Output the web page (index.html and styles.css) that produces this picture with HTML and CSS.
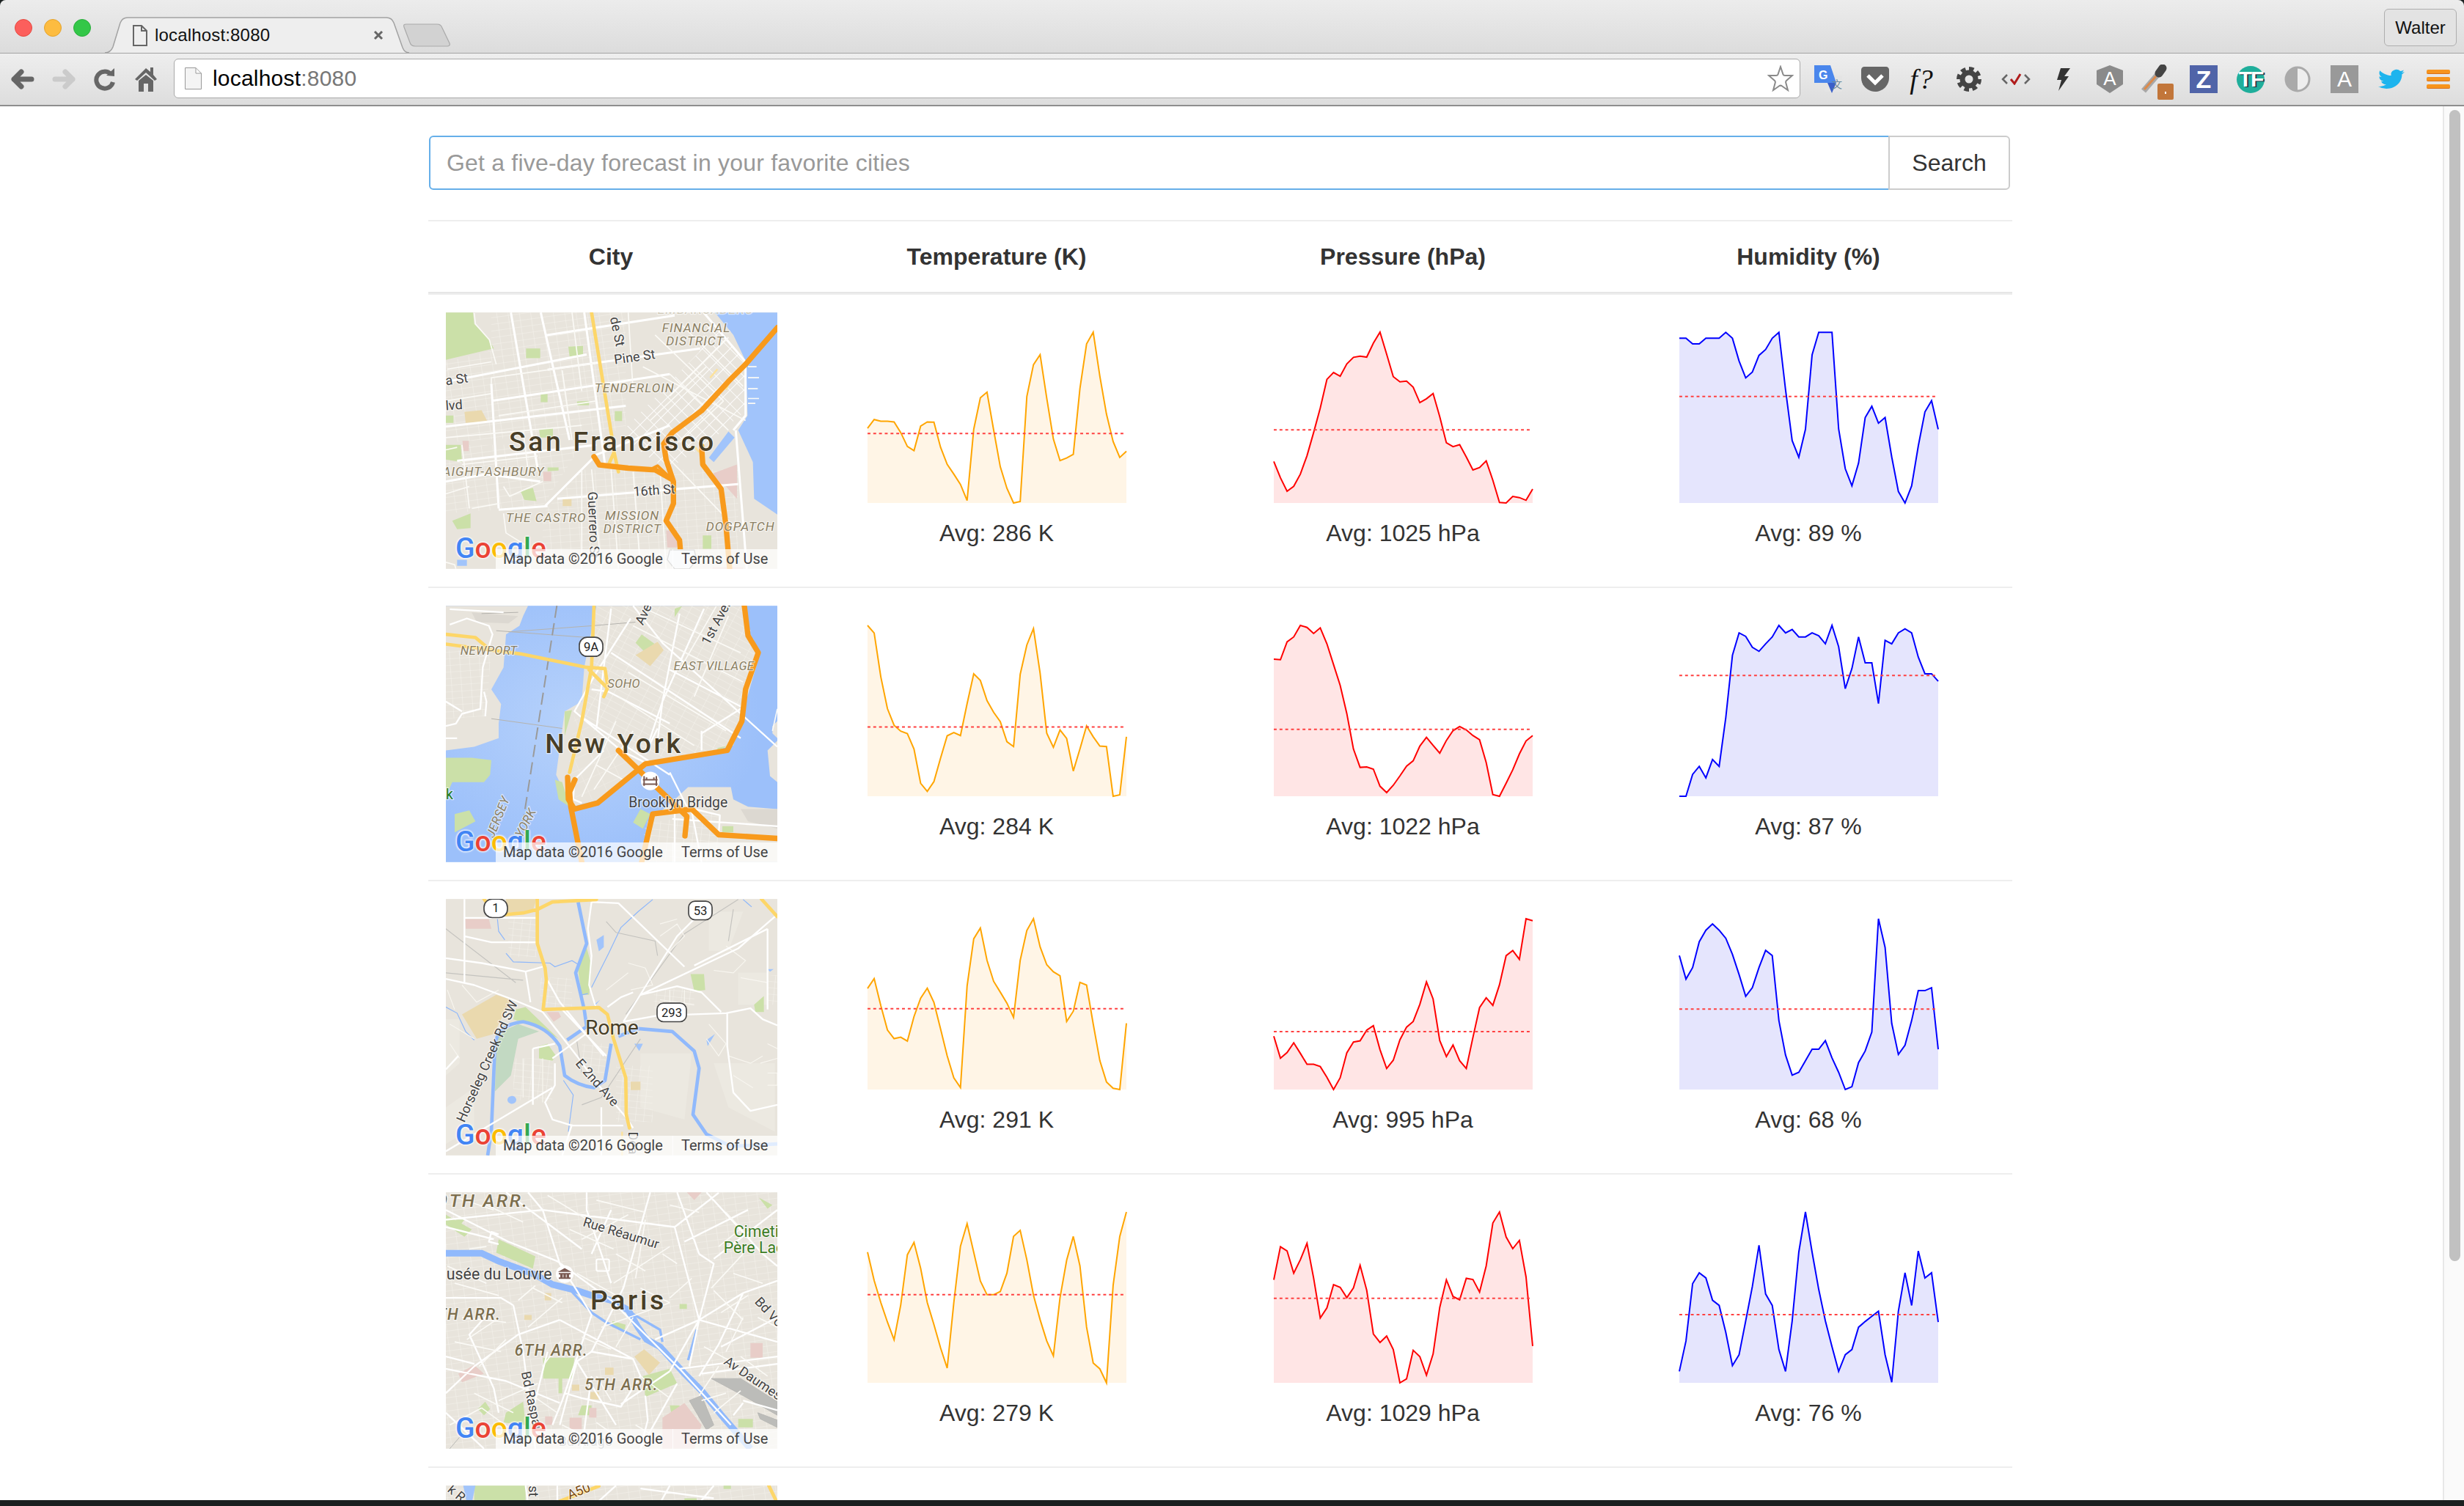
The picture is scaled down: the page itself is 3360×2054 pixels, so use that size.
FILE: index.html
```html
<!DOCTYPE html>
<html lang="en">
<head>
<meta charset="utf-8">
<title>localhost:8080</title>
<link rel="stylesheet" href="styles.css">
</head>
<body>
<svg class="defs" width="0" height="0" aria-hidden="true">
  <defs>
    <pattern id="g1" width="46" height="27" patternUnits="userSpaceOnUse" patternTransform="rotate(-8)"><path class="gl" d="M0 0H46M0 0V27"/></pattern>
    <pattern id="g2" width="40" height="40" patternUnits="userSpaceOnUse" patternTransform="rotate(-45)"><path class="gl gl-w" d="M0 0H40M0 0V40"/></pattern>
    <pattern id="g3" width="40" height="27" patternUnits="userSpaceOnUse" patternTransform="rotate(-4)"><path class="gl" d="M0 0H40M0 0V27"/></pattern>
    <pattern id="g4" width="58" height="26" patternUnits="userSpaceOnUse" patternTransform="rotate(28)"><path class="gl" d="M0 0H58M0 0V26"/></pattern>
    <pattern id="g5" width="34" height="26" patternUnits="userSpaceOnUse" patternTransform="rotate(6)"><path class="gl" d="M0 0H34M0 0V26"/></pattern>
    <pattern id="g6" width="70" height="48" patternUnits="userSpaceOnUse" patternTransform="rotate(-24)"><path class="gl gl-p" d="M0 0H70M0 0V48"/></pattern>
    <radialGradient id="wg" cx="40%" cy="45%" r="55%"><stop offset="0" stop-color="#b7d2fb"/><stop offset="1" stop-color="#9cc0fa"/></radialGradient>
  </defs>
</svg>
<div class="app">
  <header class="tabstrip">
    <div class="lights"><span class="light red"></span><span class="light amber"></span><span class="light green"></span></div>
    <div class="tab">
      <svg class="tab-shape" viewBox="0 0 415 50"><path d="M0 49C6 49 9 46 11 41L21 8C23 3 26 1 31 1H384C389 1 392 3 394 8L406 42C408 47 411 49 415 49"/></svg>
      <svg class="tab-doc" viewBox="0 0 20 29"><path d="M1 1H12L19 8V28H1Z M12 1V8H19"/></svg>
      <span class="tab-title">localhost:8080</span>
      <svg class="tab-x" viewBox="0 0 14 14"><path d="M2 2L12 12M12 2L2 12"/></svg>
    </div>
    <svg class="newtab" viewBox="0 0 64 32"><path d="M4 1H46C50 1 52 3 53 6L63 27C64 30 62 31 60 31H16C12 31 10 29 9 26L1 5C0 2 1 1 4 1Z"/></svg>
    <button class="profile">Walter</button>
  </header>
  <nav class="toolbar">
    <div class="navbtn"><svg viewBox="0 0 34 34" width="34" height="34"><path class="ico-nav" d="M5 17L15 7M5 17L15 27M5 17H29"/></svg></div>
    <div class="navbtn"><svg viewBox="0 0 34 34" width="34" height="34"><path class="ico-nav ico-off" d="M29 17L19 7M29 17L19 27M29 17H5"/></svg></div>
    <div class="navbtn"><svg viewBox="0 0 34 34" width="34" height="34"><path class="ico-reload" d="M25 10A11.5 11.5 0 1 0 28 21"/><path class="ico-fill" d="M19 12L30 2V13Z"/></svg></div>
    <div class="navbtn"><svg viewBox="0 0 30 36" width="30" height="36"><path class="ico-fill" d="M15 3L21 8V2H25V12L30 18L27 20L15 9L3 20L0 18ZM5 20L15 12L25 20V35H18V24H12V35H5Z"/></svg></div>
    <div class="omnibox">
      <svg class="omni-doc" viewBox="0 0 23 30"><path d="M.5.5H15L22.500 8V29.500H.5Z M15 .5V8H22.500"/></svg>
      <span class="url">localhost<span class="url-port">:8080</span></span>
      <svg class="omni-star" viewBox="0 0 36 36"><path d="M18 2L21.500 12.500C22 14 23 14 24 14H34L26 21C25 22 25 23 25.300 24L28 34L19.500 28C18.500 27.500 17.500 27.500 16.500 28L8 34L10.700 24C11 23 11 22 10 21L2 14H12C13 14 14 14 14.500 12.500Z"/></svg>
    </div>
    <div class="actions">
      <div class="act"><svg viewBox="0 0 38 38" width="38" height="38"><rect x="14" y="14" width="24" height="22" fill="#e4e4e4"/><path fill="#4a86ec" d="M0 0H22L30 24H0Z"/><path fill="#3a5fc8" d="M18 24H30L24 38Z"/><text class="ico-t t-g" x="6" y="19">G</text><text class="ico-t t-zh" x="24" y="31">文</text></svg></div>
      <div class="act"><svg viewBox="0 0 38 34" width="38" height="34"><path fill="#666" d="M4 0H34C36 0 38 2 38 4V15C38 26 29 34 19 34C9 34 0 26 0 15V4C0 2 2 0 4 0Z"/><path class="chev" d="M9 12L19 22L29 12"/></svg></div>
      <div class="act"><span class="ico-fq">f?</span></div>
      <div class="act"><svg viewBox="0 0 34 34" width="34" height="34"><circle class="gear-ring" cx="17" cy="17" r="9"/><circle class="gear-teeth" cx="17" cy="17" r="14" pathLength="48"/></svg></div>
      <div class="act"><svg viewBox="0 0 40 16" width="40" height="16"><path class="code-b" d="M8 2L2 8L8 14M32 2L38 8L32 14"/><path class="code-c" d="M13 8L18 14L26 1"/></svg></div>
      <div class="act"><svg viewBox="0 0 20 31" width="20" height="31"><path fill="#333" d="M7 0H20L12 11H18L4 31L8 16H2Z"/></svg></div>
      <div class="act"><svg viewBox="0 0 36 38" width="36" height="38"><path fill="#8a8a8a" d="M18 0L36 7V26L18 38L0 26V7Z"/><text class="ico-t t-a" x="18" y="27">A</text></svg></div>
      <div class="act"><svg class="ico-drop" viewBox="0 0 46 48" width="46" height="48"><path class="drop-a" d="M5 36L24 14"/><path class="drop-b" d="M6 34L22 16"/><path class="drop-c" d="M26 12L31 5"/><rect x="24" y="26" width="22" height="22" rx="2" fill="#c2763a"/><rect x="34" y="37" width="2" height="3" fill="#fff"/></svg></div>
      <div class="act"><span class="ico-box ico-z">Z</span></div>
      <div class="act"><span class="ico-tf">TF</span></div>
      <div class="act"><svg viewBox="0 0 36 36" width="36" height="36"><circle cx="18" cy="18" r="16" class="cont-o"/><path fill="#aaa" d="M18 2A16 16 0 0 0 18 34Z"/></svg></div>
      <div class="act"><span class="ico-box ico-a">A</span></div>
      <div class="act"><svg viewBox="0 0 24 24" width="36" height="32" preserveAspectRatio="none"><path fill="#1db4ee" d="M23.953 4.57a10 10 0 01-2.825.775 4.958 4.958 0 002.163-2.723c-.951.555-2.005.959-3.127 1.184a4.92 4.92 0 00-8.384 4.482C7.69 8.095 4.067 6.13 1.64 3.162a4.822 4.822 0 00-.666 2.475c0 1.71.87 3.213 2.188 4.096a4.904 4.904 0 01-2.228-.616v.06a4.923 4.923 0 003.946 4.827 4.996 4.996 0 01-2.212.085 4.936 4.936 0 004.604 3.417 9.867 9.867 0 01-6.102 2.105c-.39 0-.779-.023-1.17-.067a13.995 13.995 0 007.557 2.209c9.053 0 13.998-7.496 13.998-13.985 0-.21 0-.42-.015-.63A9.935 9.935 0 0024 4.59z"/></svg></div>
      <div class="act"><span class="ico-menu"><i></i><i></i><i></i></span></div>
    </div>
  </nav>
  <div class="viewport">
    <main class="page">
      <form class="search">
        <input class="search-input" type="text" placeholder="Get a five-day forecast in your favorite cities">
        <button class="search-btn" type="button">Search</button>
      </form>
      <table class="weather">
        <colgroup><col class="c-city"><col class="c-data"><col class="c-data"><col class="c-data"></colgroup>
        <thead>
          <tr><th>City</th><th>Temperature (K)</th><th>Pressure (hPa)</th><th>Humidity (%)</th></tr>
        </thead>
        <tbody>
          <tr>
            <td class="city"><div class="map">
              <svg class="map-art" viewBox="84 78 1356 1049">
                <rect class="land" x="84" y="78" width="1356" height="1049"/>
                <path class="park" d="M84 78H195L200 125L262 190L280 225L84 272Z"/>
                <path fill="url(#g1)" d="M270 78H820V560L84 610V280L270 235Z"/>
                <path fill="url(#g2)" d="M810 560L1120 240L1160 90L1310 280V480L1160 610L990 720L870 640Z"/>
                <path fill="url(#g3)" d="M640 720H1280V1127H480V900Z"/>
                <path fill="url(#g1)" d="M84 620H640L480 870L84 900Z"/>
                <path class="water" d="M1185 78L1260 170L1312 280L1318 500L1280 560L1340 690L1345 840L1440 905V78Z"/>
                <path class="rd-m" d="M1320 300H1355M1320 345H1365M1320 390H1360M1320 430H1365M1320 450H1350"/>
                <path class="park" d="M412 225H470V265H412ZM585 218L645 215V250L590 258ZM472 412H500V445H472ZM620 442L670 440V458H622ZM775 482H805V522H775ZM465 555L522 550V590H470ZM84 620H145L150 690L84 680ZM390 810L440 795L455 850L405 845ZM1135 990H1170V1045H1135ZM110 930L185 900L185 960L130 965ZM84 500H115V530H84ZM500 712L545 712V725L500 728Z"/>
                <path class="beige" d="M160 485L230 478L255 525L165 530ZM562 842H598V870H562Z"/>
                <path class="pink" d="M152 603H178V645H155ZM482 730H515V768H484ZM1180 735L1275 700V840L1230 790L1180 760ZM985 970H1030V1040H990ZM1175 1120H1300V1127H1175Z"/>
                <path class="water" d="M1160 672L1240 565L1265 590L1180 690ZM130 1090H170V1115H130Z"/>
                <path class="rd-b" d="M490 870L700 660L1000 540M84 545L820 460M270 440L1000 330M84 362L660 250M130 685L700 620M490 172L1020 90M500 312L1125 225M350 78L460 720M472 78L590 600M270 370L300 880M650 78L735 700M84 770L250 740L470 770M300 885L500 870M540 840L1280 780M1270 560L1315 1127M1140 80L1310 280L1310 500L1260 560"/>
                <path class="rd-m" d="M200 80L205 125L262 190L290 290M320 900L330 980L410 1030L430 1127M84 1100L120 1110L125 1127M640 720V1127M680 720L720 1127M760 720L790 1127M850 730L880 1127M960 720L985 1127M1000 680L1270 960M560 315L600 600M830 78L850 400M270 370V345L700 285M890 300L1310 520M1000 330L1240 560M940 170L1220 440M1050 130L1300 380M1240 180L1000 420M1150 300L920 520M1220 440L1040 610M84 440L270 410M84 640L130 630M150 620L180 880M84 820L180 790M190 880L300 860M320 790L345 830L480 770M150 700L460 665M84 590L640 540M300 500L700 440M90 310L270 280M600 78L640 400M400 560L420 720"/>
                <path class="ar" d="M680 78L762 580L772 650L750 700M772 650L790 730"/>
                <path class="ar-t" d="M1165 345L1195 310M1230 395L1250 350M1100 625L1120 650M970 620L1000 590"/>
                <path class="hw" d="M1440 140L1310 290L1240 360L1130 480L1010 570L975 615L985 680L1015 770L1015 860L985 930L1040 1010L1050 1127"/>
                <path class="hw" d="M690 668L712 702L830 715L940 722L1010 762"/>
                <path class="hw hw-t" d="M925 718L950 705L1010 762"/>
                <path class="hw" d="M1130 625L1135 700L1210 800L1230 950L1245 1127"/>
                <path class="shield" d="M1000 1050H1100L1110 1090L1080 1127H1020L990 1090Z"/>
                <text class="m-area" x="968" y="158">FINANCIAL</text>
                <text class="m-area" x="985" y="212">DISTRICT</text>
                <text class="m-area m-faint" x="950" y="84">EMBARCADERO</text>
                <text class="m-area" x="692" y="405">TENDERLOIN</text>
                <text class="m-road" transform="translate(775 290) rotate(-8)">Pine St</text>
                <text class="m-road" transform="translate(755 100) rotate(78)">de St</text>
                <text class="m-road" transform="translate(72 378) rotate(-8)">ia St</text>
                <text class="m-road" transform="translate(84 478) rotate(-4)">lvd</text>
                <text class="m-city" x="342" y="645">San Francisco</text>
                <text class="m-area" x="487" y="747" text-anchor="end">HAIGHT-ASHBURY</text>
                <text class="m-road" transform="translate(852 830) rotate(-4)">16th St</text>
                <text class="m-area" x="330" y="935">THE CASTRO</text>
                <text class="m-road" transform="translate(665 812) rotate(88)">Guerrero St</text>
                <text class="m-area" x="735" y="928">MISSION</text>
                <text class="m-area" x="728" y="982">DISTRICT</text>
                <text class="m-area" x="1148" y="972">DOGPATCH</text>
              </svg>
              <div class="g-logo"><span class="g1">G</span><span class="g2">o</span><span class="g3">o</span><span class="g1">g</span><span class="g4">l</span><span class="g2">e</span></div>
              <div class="map-foot"><span class="foot-data">Map data ©2016 Google</span><span class="foot-terms">Terms of Use</span></div>
            </div></td>
            <td><div class="chart temp"><svg viewBox="0 100 39 698" preserveAspectRatio="none"><polygon class="area" points="0,493 1,457 2,464 3,464 4,467 5,510 6,567 7,584 8,484 9,467 10,468 11,570 12,640 13,680 14,722 15,788 16,497 17,368 18,345 19,500 20,650 21,738 22,798 23,792 24,363 25,233 26,192 27,370 28,537 29,625 30,614 31,599 32,330 33,148 34,100 35,280 36,435 37,547 38,612 39,587 39,798 0,798"/><polyline class="line" points="0,493 1,457 2,464 3,464 4,467 5,510 6,567 7,584 8,484 9,467 10,468 11,570 12,640 13,680 14,722 15,788 16,497 17,368 18,345 19,500 20,650 21,738 22,798 23,792 24,363 25,233 26,192 27,370 28,537 29,625 30,614 31,599 32,330 33,148 34,100 35,280 36,435 37,547 38,612 39,587"/><line class="ref" x1="0" x2="38.6" y1="514" y2="514"/></svg><p class="avg">Avg: 286 K</p></div></td>
            <td><div class="chart pres"><svg viewBox="0 100 39 698" preserveAspectRatio="none"><polygon class="area" points="0,628 1,695 2,750 3,730 4,680 5,605 6,510 7,410 8,293 9,265 10,280 11,230 12,203 13,198 14,202 15,145 16,100 17,190 18,282 19,303 20,300 21,325 22,388 23,372 24,351 25,445 26,552 27,568 28,560 29,610 30,663 31,653 32,626 33,705 34,796 35,798 36,771 37,776 38,787 39,741 39,798 0,798"/><polyline class="line" points="0,628 1,695 2,750 3,730 4,680 5,605 6,510 7,410 8,293 9,265 10,280 11,230 12,203 13,198 14,202 15,145 16,100 17,190 18,282 19,303 20,300 21,325 22,388 23,372 24,351 25,445 26,552 27,568 28,560 29,610 30,663 31,653 32,626 33,705 34,796 35,798 36,771 37,776 38,787 39,741"/><line class="ref" x1="0" x2="38.6" y1="499" y2="499"/></svg><p class="avg">Avg: 1025 hPa</p></div></td>
            <td><div class="chart humi"><svg viewBox="0 100 39 698" preserveAspectRatio="none"><polygon class="area" points="0,125 1,125 2,148 3,148 4,125 5,125 6,125 7,101 8,125 9,218 10,287 11,263 12,195 13,171 14,125 15,101 16,335 17,543 18,611 19,497 20,193 21,101 22,101 23,101 24,495 25,658 26,728 27,635 28,449 29,403 30,472 31,449 32,610 33,751 34,798 35,728 36,565 37,426 38,380 39,497 39,798 0,798"/><polyline class="line" points="0,125 1,125 2,148 3,148 4,125 5,125 6,125 7,101 8,125 9,218 10,287 11,263 12,195 13,171 14,125 15,101 16,335 17,543 18,611 19,497 20,193 21,101 22,101 23,101 24,495 25,658 26,728 27,635 28,449 29,403 30,472 31,449 32,610 33,751 34,798 35,728 36,565 37,426 38,380 39,497"/><line class="ref" x1="0" x2="38.6" y1="363" y2="363"/></svg><p class="avg">Avg: 89 %</p></div></td>
          </tr>
          <tr>
            <td class="city"><div class="map">
              <svg class="map-art" viewBox="84 48 1356 1049">
                <rect fill="url(#wg)" x="84" y="48" width="1356" height="1049"/>
                <path class="land" d="M84 48H420L400 90L385 130L330 165L320 300L270 390L310 450L300 530L300 590L200 625L84 640Z"/>
                <path fill="url(#g3)" d="M84 230H270L250 500L84 510Z"/>
                <path class="land-d" d="M190 75L380 90L340 120L210 115Z"/>
                <path class="land" d="M700 48H1300L1330 180L1370 240L1300 480L1260 620L1100 660L900 695L800 770L720 840L640 860L600 870L565 800L535 740L570 480L640 440L650 300Z"/>
                <path fill="url(#g4)" d="M700 48H1300L1360 240L1300 500L1240 630L1000 670L760 640L650 520L660 400Z"/>
                <path fill="url(#g6)" d="M610 500L800 640L880 700L720 840L620 840L580 760Z"/>
                <path class="land" d="M880 1097L910 930L1000 860L1075 790L1250 790L1260 840L1320 870L1440 880V1097Z"/>
                <path fill="url(#g5)" d="M900 940L1200 890V1097H880Z"/>
                <path class="land-d" d="M1290 880L1440 880V960L1320 930Z"/>
                <path class="land" d="M1400 640L1440 600V770L1410 745ZM1420 540L1440 520V590L1420 570Z"/>
                <path class="park" d="M84 670H190L270 680L265 740L240 770L110 770L84 830ZM120 900L180 885L205 930L120 975ZM530 760L560 770L590 870L545 840ZM570 480L600 475L570 580ZM880 880L920 900L890 960L850 935ZM1195 630L1240 620L1195 640ZM1215 950L1260 950V975H1215ZM1020 60L1050 50L1020 95ZM885 165L960 220L920 260L860 200Z"/>
                <path class="beige" d="M885 235L950 195L975 230L920 295L860 250Z"/>
                <path class="rd-thin" d="M290 150L690 180M340 155L680 130L860 115M270 510L560 550M230 80L380 75"/>
                <path class="dash" d="M538 48L400 930"/>
                <path class="rd-w" d="M100 62L320 75M100 125L170 100L260 130L275 165L235 300L225 470L150 490L125 530L84 540M84 440L150 480M240 400L250 440L245 500M84 590H130M650 510L1000 740M760 60L730 300L700 550M850 48L970 200L1440 625M840 100L700 320L610 480L800 640L900 690M1000 310L1290 460M1140 60L970 440L900 650M1040 80L970 440L950 600M1000 730L1075 880M1200 990L1205 905L1100 880M1090 890L1130 1097M1020 880V1097M1010 920L1440 950M760 240L1290 590M680 390L750 400L1000 530M950 550L900 650M1130 560V640M730 640L610 760L605 840L640 855M1290 470L1130 570"/>
                <path class="rd-m" d="M850 130L1300 360M900 60L1290 240M1190 50L1040 310M1240 90L1100 420M830 320L1230 560M790 420L1100 620M780 520L640 830M850 560L690 800M700 700L810 760M1420 560L1440 470"/>
                <path class="ar" d="M690 48L680 300L640 520L590 730"/>
                <path class="ar" d="M84 165L205 178L255 220"/>
                <path class="ar" d="M84 205L390 245L660 300L735 305L745 370M670 310L745 385L730 420"/>
                <path class="hw" d="M1305 48L1320 170L1362 240L1310 390L1295 520L1235 640L900 695L705 855L610 880L585 840L582 750"/>
                <path class="hw" d="M612 760L590 810L595 870M595 870L640 1097"/>
                <path class="hw" d="M790 640L1070 910L1062 990"/>
                <path class="hw" d="M885 1097L930 900L1090 880L1200 985L1440 1000"/>
                <circle class="ico-bg" cx="920" cy="765" r="38"/>
                <path class="pin" d="M895 745V785M945 745V785M890 760H950M890 778H950M905 760V750M935 760V750"/>
                <rect class="shield2" x="630" y="177" width="96" height="78" rx="32"/>
                <text class="m-num" x="678" y="233">9A</text>
                <text class="m-area m-s" x="143" y="250">NEWPORT</text>
                <text class="m-road" transform="translate(890 130) rotate(-65)">Ave</text>
                <text class="m-road" transform="translate(1160 212) rotate(-62)">1st Aven</text>
                <text class="m-area m-s" x="745" y="385">SOHO</text>
                <text class="m-area m-s" x="1016" y="312">EAST VILLAGE</text>
                <text class="m-city" x="490" y="650">New York</text>
                <text class="m-poi" x="832" y="872">Brooklyn Bridge</text>
                <text class="m-green" x="84" y="840">k</text>
                <text class="m-area m-s" transform="translate(280 1000) rotate(-68)">JERSEY</text>
                <text class="m-area m-s" transform="translate(395 1000) rotate(-62)">YORK</text>
              </svg>
              <div class="g-logo"><span class="g1">G</span><span class="g2">o</span><span class="g3">o</span><span class="g1">g</span><span class="g4">l</span><span class="g2">e</span></div>
              <div class="map-foot"><span class="foot-data">Map data ©2016 Google</span><span class="foot-terms">Terms of Use</span></div>
            </div></td>
            <td><div class="chart temp"><svg viewBox="0 70 39 698" preserveAspectRatio="none"><polygon class="area" points="0,70 1,101 2,280 3,410 4,478 5,502 6,512 7,575 8,715 9,748 10,708 11,612 12,521 13,508 14,520 15,390 16,268 17,295 18,377 19,425 20,463 21,545 22,565 23,270 24,150 25,83 26,265 27,510 28,568 29,497 30,532 31,665 32,575 33,480 34,525 35,563 36,565 37,768 38,762 39,525 39,768 0,768"/><polyline class="line" points="0,70 1,101 2,280 3,410 4,478 5,502 6,512 7,575 8,715 9,748 10,708 11,612 12,521 13,508 14,520 15,390 16,268 17,295 18,377 19,425 20,463 21,545 22,565 23,270 24,150 25,83 26,265 27,510 28,568 29,497 30,532 31,665 32,575 33,480 34,525 35,563 36,565 37,768 38,762 39,525"/><line class="ref" x1="0" x2="38.6" y1="485" y2="485"/></svg><p class="avg">Avg: 284 K</p></div></td>
            <td><div class="chart pres"><svg viewBox="0 70 39 698" preserveAspectRatio="none"><polygon class="area" points="0,208 1,210 2,137 3,117 4,70 5,78 6,103 7,80 8,145 9,230 10,315 11,430 12,575 13,650 14,648 15,657 16,727 17,753 18,723 19,685 20,645 21,623 22,563 23,527 24,560 25,592 26,540 27,500 28,483 29,497 30,520 31,537 32,630 33,761 34,768 35,715 36,660 37,595 38,542 39,520 39,768 0,768"/><polyline class="line" points="0,208 1,210 2,137 3,117 4,70 5,78 6,103 7,80 8,145 9,230 10,315 11,430 12,575 13,650 14,648 15,657 16,727 17,753 18,723 19,685 20,645 21,623 22,563 23,527 24,560 25,592 26,540 27,500 28,483 29,497 30,520 31,537 32,630 33,761 34,768 35,715 36,660 37,595 38,542 39,520"/><line class="ref" x1="0" x2="38.6" y1="495" y2="495"/></svg><p class="avg">Avg: 1022 hPa</p></div></td>
            <td><div class="chart humi"><svg viewBox="0 30 39 297" preserveAspectRatio="none"><polygon class="area" points="0,327 1,327 2,289 3,275 4,295 5,263 6,275 7,190 8,82 9,43 10,49 11,68 12,75 13,62 14,50 15,30 16,43 17,37 18,50 19,50 20,43 21,48 22,62 23,30 24,67 25,140 26,105 27,50 28,95 29,95 30,166 31,56 32,62 33,43 34,36 35,43 36,85 37,114 38,114 39,127 39,327 0,327"/><polyline class="line" points="0,327 1,327 2,289 3,275 4,295 5,263 6,275 7,190 8,82 9,43 10,49 11,68 12,75 13,62 14,50 15,30 16,43 17,37 18,50 19,50 20,43 21,48 22,62 23,30 24,67 25,140 26,105 27,50 28,95 29,95 30,166 31,56 32,62 33,43 34,36 35,43 36,85 37,114 38,114 39,127"/><line class="ref" x1="0" x2="38.6" y1="117" y2="117"/></svg><p class="avg">Avg: 87 %</p></div></td>
          </tr>
          <tr>
            <td class="city"><div class="map">
              <svg class="map-art" viewBox="84 48 1356 1049">
                <rect class="land" x="84" y="48" width="1356" height="1049"/>
                <path class="land-l" d="M880 680H1090L1060 950L880 900ZM1160 100H1300L1240 260H1160ZM84 540H140V720L84 770ZM1280 350H1400V480H1280ZM1180 720H1430V1000L1240 900ZM84 900L200 820V980L84 1050Z"/>
                <path fill="url(#g5)" d="M340 130H455V285H340ZM360 700H520V870H360ZM780 730H930V960H780ZM935 415H1100V500H935ZM470 370H600V490H470ZM640 640H750V760H640ZM1400 360H1440V480H1400Z"/>
                <path class="beige" d="M150 520L290 440L350 460L280 600L210 620ZM330 48H455L440 95L330 105ZM840 795H880V830H840Z"/>
                <path class="pink" d="M162 130H260L270 170H165ZM495 510H545L555 530L525 550Z"/>
                <path class="park" d="M625 340L655 230L680 320L670 440L640 440ZM1085 355H1140L1145 420L1100 425ZM1345 480L1385 445V510L1350 510ZM465 650L500 640L535 690L520 710L465 700ZM370 500L410 490L545 620L460 570L360 540Z"/>
                <path class="park-t" d="M290 600L380 560L465 590L380 620L350 770L285 835Z"/>
                <path class="river" d="M625 60L660 230L615 350L650 500L660 570L580 625"/>
                <path class="river" d="M270 1000L255 1097M270 1000L285 640Q300 560 400 550Q500 570 550 650L570 770Q620 810 690 820L735 790L760 640"/>
                <path class="river" d="M790 610L870 578L1010 590L1100 670L1120 740L1095 930L1150 1010L1250 1060L1440 1050"/>
                <path class="stream" d="M295 130L300 180L325 215M330 270L360 305L510 310L530 325L600 300L625 315M84 490L130 515L165 590L200 625M930 50L870 100L800 165L750 270L710 350L680 410M565 790L605 850L585 1000M640 440L665 435M1300 50L1335 80"/>
                <path class="water" d="M700 215L730 195V245L710 262ZM1400 335H1425L1410 345ZM855 640L890 640L875 670ZM340 880A18 16 0 1 1 341 881ZM1150 625L1185 600L1155 650ZM690 480L715 460L690 490Z"/>
                <path class="rail" d="M84 170L370 390M84 350L400 380M740 140L780 185L940 220L950 280M1280 50L1060 190L820 520M640 890L720 860L880 620M1260 90L1240 220M620 630L640 760"/>
                <path class="rd-s" d="M960 200L1030 150L1060 200L1000 260M1230 240L1310 300L1260 350L1180 340M1160 560L1230 640L1200 690L1150 620M1370 720L1440 700M1400 760H1440V810H1400M830 310L900 330L930 400L840 420M150 400L210 470L300 420M90 420L120 500M1240 690L1330 720L1380 690M1260 770L1340 820M960 150L1030 130M1290 370L1400 390M740 420L830 350M480 700V880M400 700V860M1440 660L1400 640M100 640L140 700M200 620L100 560M960 460L1100 480M1000 420V500M1060 420V500"/>
                <path class="rd-w" d="M84 375L200 400L360 460L480 510L620 690L700 800L820 940L850 985M680 60L790 65L1060 325M680 60L665 170L680 280L670 400L700 500M84 290L230 310L410 345L480 325M160 48V390M160 125H460M160 200L270 225H460M410 345L430 470M810 550L1030 200L1110 120M810 550L950 525L1230 515L1330 495L1380 540L1440 565M880 440L1280 250L1430 120M880 440L1030 405L1130 430L1210 510M520 700L670 590M530 720L530 810L490 880L520 950L600 975L810 975M84 745L135 690M1235 515L1235 650L1260 840L1330 915L1440 890M84 1080L520 820M720 900V1097M440 660V890M1400 170V500M500 380L550 470L730 690M560 500L740 690M440 660L530 640M745 490L800 450L850 430M1400 170L1100 320M600 970L560 1097"/>
                <path class="ar" d="M240 48L290 115L400 105L460 90L520 60L700 50M458 48V230L490 330L495 380L482 500L710 492L745 520L770 620L820 780L822 930L835 985M1375 48L1440 120"/>
                <path class="ar-t" d="M805 1000V1097"/>
                <rect class="shield2" x="240" y="48" width="96" height="76" rx="34"/>
                <text class="m-num" x="288" y="102">1</text>
                <rect class="shield2" x="1077" y="57" width="96" height="76" rx="26"/>
                <text class="m-num" x="1125" y="113">53</text>
                <rect class="shield2" x="948" y="474" width="120" height="76" rx="26"/>
                <text class="m-num" x="1008" y="530">293</text>
                <text class="m-rome" x="655" y="603">Rome</text>
                <text class="m-road" transform="translate(160 965) rotate(-66)">Horseleg Creek Rd SW</text>
                <text class="m-road" transform="translate(612 722) rotate(49)">E 2nd Ave</text>
                <text class="m-road" transform="translate(830 1000) rotate(90)">Dean</text>
              </svg>
              <div class="g-logo"><span class="g1">G</span><span class="g2">o</span><span class="g3">o</span><span class="g1">g</span><span class="g4">l</span><span class="g2">e</span></div>
              <div class="map-foot"><span class="foot-data">Map data ©2016 Google</span><span class="foot-terms">Terms of Use</span></div>
            </div></td>
            <td><div class="chart temp"><svg viewBox="0 70 39 698" preserveAspectRatio="none"><polygon class="area" points="0,355 1,315 2,425 3,525 4,560 5,554 6,570 7,470 8,395 9,354 10,412 11,520 12,630 13,720 14,760 15,345 16,152 17,108 18,240 19,326 20,370 21,415 22,473 23,240 24,118 25,70 26,185 27,258 28,287 29,303 30,490 31,448 32,330 33,341 34,500 35,650 36,737 37,763 38,768 39,497 39,768 0,768"/><polyline class="line" points="0,355 1,315 2,425 3,525 4,560 5,554 6,570 7,470 8,395 9,354 10,412 11,520 12,630 13,720 14,760 15,345 16,152 17,108 18,240 19,326 20,370 21,415 22,473 23,240 24,118 25,70 26,185 27,258 28,287 29,303 30,490 31,448 32,330 33,341 34,500 35,650 36,737 37,763 38,768 39,497"/><line class="ref" x1="0" x2="38.6" y1="438" y2="438"/></svg><p class="avg">Avg: 291 K</p></div></td>
            <td><div class="chart pres"><svg viewBox="0 70 39 698" preserveAspectRatio="none"><polygon class="area" points="0,550 1,640 2,617 3,577 4,620 5,665 6,665 7,674 8,718 9,768 10,720 11,618 12,574 13,569 14,525 15,507 16,605 17,682 18,648 19,565 20,513 21,490 22,420 23,328 24,398 25,568 26,633 27,586 28,650 29,682 30,555 31,433 32,393 33,424 34,340 35,221 36,200 37,236 38,70 39,78 39,768 0,768"/><polyline class="line" points="0,550 1,640 2,617 3,577 4,620 5,665 6,665 7,674 8,718 9,768 10,720 11,618 12,574 13,569 14,525 15,507 16,605 17,682 18,648 19,565 20,513 21,490 22,420 23,328 24,398 25,568 26,633 27,586 28,650 29,682 30,555 31,433 32,393 33,424 34,340 35,221 36,200 37,236 38,70 39,78"/><line class="ref" x1="0" x2="38.6" y1="531" y2="531"/></svg><p class="avg">Avg: 995 hPa</p></div></td>
            <td><div class="chart humi"><svg viewBox="0 543 39 297" preserveAspectRatio="none"><polygon class="area" points="0,607 1,648 2,628 3,583 4,563 5,552 6,563 7,577 8,605 9,640 10,678 11,663 12,628 13,598 14,607 15,720 16,780 17,815 18,810 19,790 20,770 21,770 22,755 23,785 24,810 25,840 26,835 27,793 28,773 29,740 30,543 31,593 32,725 33,779 34,763 35,720 36,668 37,668 38,663 39,770 39,840 0,840"/><polyline class="line" points="0,607 1,648 2,628 3,583 4,563 5,552 6,563 7,577 8,605 9,640 10,678 11,663 12,628 13,598 14,607 15,720 16,780 17,815 18,810 19,790 20,770 21,770 22,755 23,785 24,810 25,840 26,835 27,793 28,773 29,740 30,543 31,593 32,725 33,779 34,763 35,720 36,668 37,668 38,663 39,770"/><line class="ref" x1="0" x2="38.6" y1="700" y2="700"/></svg><p class="avg">Avg: 68 %</p></div></td>
          </tr>
          <tr>
            <td class="city"><div class="map">
              <svg class="map-art" viewBox="84 48 1356 1049">
                <rect class="land" x="84" y="48" width="1356" height="1049"/>
                <path fill="url(#g1)" d="M84 48H1440V1097H84Z"/>
                <path class="park" d="M300 240L450 310L440 360L290 295ZM482 725H610L600 810H560V870H545V810H482ZM890 800L1000 770L1030 830L900 885ZM84 140L190 200L160 230L84 180ZM1365 70L1420 100L1400 115ZM1040 505H1070V525H1040ZM215 935L245 905L265 935L240 960ZM765 575L820 590L815 610L765 600ZM330 950L400 905L410 1000L320 990ZM1000 920L1040 920L1050 1000L1015 1000ZM640 920H680V960H625ZM1280 975H1340V1010H1280ZM125 160H160L130 200Z"/>
                <path class="beige" d="M855 720L895 690L960 745L915 795ZM735 765H770V795H735ZM488 460H515V490H488ZM600 835H630V860H600ZM675 865H710V895H675ZM405 550H435V570H405Z"/>
                <path class="pink" d="M135 790L200 755L240 790L150 825ZM1330 665H1380V725H1330ZM1070 48H1130L1100 80ZM970 970L1060 910L1130 1000L1100 1097H970ZM590 970H640V1020H590ZM490 965H520V1000H490ZM670 930H700V970H670Z"/>
                <path class="rail-f" d="M1170 810L1290 810L1440 905V960L1300 880Z"/>
                <path class="rail-f" d="M1360 950L1440 980V1010L1370 975ZM1080 900L1130 880L1180 1000L1150 1020ZM100 1097L140 1050"/>
                <path class="river-p" d="M84 297H230L300 330L450 385L520 425L620 450L680 470L760 490L830 530L870 600L905 650L960 680L1060 790L1130 860L1220 970L1330 1097"/>
                <path class="stream2" d="M830 535L960 610L970 660M600 455L680 540L740 580L880 650M1110 610L1075 735"/>
                <path class="rd-w" d="M84 120L340 250L540 330L760 490L1040 770L1250 1000M84 190L280 240M84 160L480 120L1020 190M420 48L480 120L550 340L620 450L680 550L560 900L520 1000M920 48L810 440L680 700L620 740L550 1000M330 48L640 280M660 48V120L760 420M1020 190L1120 570L1000 780M1030 48L1120 300L1180 340L1120 570L1080 760M1150 48L1380 300L1440 350M1440 120L1180 320M1300 460L1120 570L940 650M1440 410L1300 460L1200 670L1120 800M1120 570L1440 660M360 510L400 700L450 1097M84 480H310L360 510M84 770L330 820L550 910M280 520L180 630L280 850L300 950M84 870L200 760L380 630L550 570M550 570L850 730L880 800L800 925L640 890L570 870M1000 780L800 915M1040 770L1440 720M1130 790L1440 750M680 700L850 730M84 720L200 750M1060 250L1320 120M1020 190L1200 50M1210 680L1440 560M1300 900L1440 940M1260 960L1300 910M680 800L640 1097M900 880L910 980L880 1097M1030 830L880 1097M500 700L400 1097M620 740L780 1000M84 950L240 1097M760 120L680 300M300 260L260 250L270 210L300 220"/>
                <path class="rd-m" d="M500 60L680 170M830 140L640 240M590 200L770 280M180 280L250 270M970 300L1030 340M770 420L1000 270M1170 440L1300 300M450 430L380 490M560 480L420 600M720 600L1000 500M1210 540L1320 470M330 650L220 760M290 570L170 650M700 800L760 900M410 860L540 950M1130 900L1230 870M1300 190L1200 270M1180 450L1300 570M1360 560L1440 600M780 300L900 370M880 440L1000 500M620 380L800 480M900 160L860 400M90 350L250 420M120 420L300 470M440 440L560 500M150 560L330 580M120 660L310 700M200 870L360 950M300 900L460 830M560 650L480 760M640 640L760 690M780 680L850 560M880 800L1000 890M1090 400L1000 480M1230 130L1330 240M1260 380L1380 420M1300 560L1230 700M1140 680L1250 740M1290 720L1400 800M1120 880L1200 760M1180 950L1290 860M860 1000L960 1060M700 990L800 1060M560 1000L680 1060M230 930L340 1010M100 1000L230 930M1000 100L1120 130M700 80L900 130M250 100L400 170M130 70L280 120"/>
                <rect class="museum" x="700" y="322" width="52" height="48" rx="6"/>
                <text class="m-area m-b" x="425" y="108" text-anchor="end">9TH ARR.</text>
                <text class="m-road" transform="translate(642 185) rotate(17)">Rue Réaumur</text>
                <text class="m-green2" x="1262" y="232">Cimetière</text>
                <text class="m-green2" x="1220" y="298">Père Lachaise</text>
                <text class="m-poi2" x="518" y="405" text-anchor="end">Musée du Louvre</text>
                <circle class="ico-bg" cx="570" cy="383" r="36"/>
                <path class="pin-f" d="M570 358L598 374H542ZM546 378H594V384H546ZM546 396H594V402H546ZM552 384H562V396H552ZM578 384H588V396H578ZM565 384H575V396H565Z"/>
                <text class="m-city" x="675" y="527">Paris</text>
                <text class="m-area m-b2" x="310" y="570" text-anchor="end">7TH ARR.</text>
                <text class="m-area m-b2" x="365" y="717">6TH ARR.</text>
                <text class="m-area m-b2" x="652" y="857">5TH ARR.</text>
                <text class="m-road" transform="translate(392 785) rotate(78)">Bd Raspail</text>
                <text class="m-road" transform="translate(1345 498) rotate(47)">Bd Voltaire</text>
                <text class="m-road" transform="translate(1218 748) rotate(34)">Av Daumesnil</text>
                <text class="m-road m-fade" x="545" y="1085">Bd Arago</text>
              </svg>
              <div class="g-logo"><span class="g1">G</span><span class="g2">o</span><span class="g3">o</span><span class="g1">g</span><span class="g4">l</span><span class="g2">e</span></div>
              <div class="map-foot"><span class="foot-data">Map data ©2016 Google</span><span class="foot-terms">Terms of Use</span></div>
            </div></td>
            <td><div class="chart temp"><svg viewBox="0 70 39 698" preserveAspectRatio="none"><polygon class="area" points="0,234 1,350 2,440 3,520 4,592 5,450 6,245 7,194 8,300 9,440 10,530 11,625 12,708 13,440 14,210 15,118 16,235 17,352 18,408 19,408 20,395 21,320 22,170 23,145 24,265 25,410 26,510 27,597 28,658 29,420 30,267 31,170 32,290 33,540 34,687 35,711 36,768 37,370 38,170 39,70 39,768 0,768"/><polyline class="line" points="0,234 1,350 2,440 3,520 4,592 5,450 6,245 7,194 8,300 9,440 10,530 11,625 12,708 13,440 14,210 15,118 16,235 17,352 18,408 19,408 20,395 21,320 22,170 23,145 24,265 25,410 26,510 27,597 28,658 29,420 30,267 31,170 32,290 33,540 34,687 35,711 36,768 37,370 38,170 39,70"/><line class="ref" x1="0" x2="38.6" y1="408" y2="408"/></svg><p class="avg">Avg: 279 K</p></div></td>
            <td><div class="chart pres"><svg viewBox="0 70 39 698" preserveAspectRatio="none"><polygon class="area" points="0,347 1,212 2,229 3,320 4,265 5,198 6,340 7,503 8,462 9,367 10,378 11,420 12,380 13,288 14,390 15,568 16,603 17,577 18,632 19,768 20,752 21,635 22,661 23,737 24,650 25,460 26,347 27,415 28,429 29,341 30,346 31,397 32,290 33,115 34,70 35,172 36,220 37,186 38,335 39,618 39,768 0,768"/><polyline class="line" points="0,347 1,212 2,229 3,320 4,265 5,198 6,340 7,503 8,462 9,367 10,378 11,420 12,380 13,288 14,390 15,568 16,603 17,577 18,632 19,768 20,752 21,635 22,661 23,737 24,650 25,460 26,347 27,415 28,429 29,341 30,346 31,397 32,290 33,115 34,70 35,172 36,220 37,186 38,335 39,618"/><line class="ref" x1="0" x2="38.6" y1="423" y2="423"/></svg><p class="avg">Avg: 1029 hPa</p></div></td>
            <td><div class="chart humi"><svg viewBox="0 1055 39 298" preserveAspectRatio="none"><polygon class="area" points="0,1333 1,1280 2,1180 3,1161 4,1170 5,1209 6,1218 7,1265 8,1323 9,1304 10,1245 11,1185 12,1113 13,1198 14,1218 15,1295 16,1333 17,1245 18,1125 19,1055 20,1125 21,1190 22,1245 23,1290 24,1333 25,1304 26,1295 27,1256 28,1246 29,1237 30,1228 31,1304 32,1352 33,1228 34,1161 35,1218 36,1123 37,1170 38,1161 39,1247 39,1353 0,1353"/><polyline class="line" points="0,1333 1,1280 2,1180 3,1161 4,1170 5,1209 6,1218 7,1265 8,1323 9,1304 10,1245 11,1185 12,1113 13,1198 14,1218 15,1295 16,1333 17,1245 18,1125 19,1055 20,1125 21,1190 22,1245 23,1290 24,1333 25,1304 26,1295 27,1256 28,1246 29,1237 30,1228 31,1304 32,1352 33,1228 34,1161 35,1218 36,1123 37,1170 38,1161 39,1247"/><line class="ref" x1="0" x2="38.6" y1="1234" y2="1234"/></svg><p class="avg">Avg: 76 %</p></div></td>
          </tr>
          <tr>
            <td class="city"><div class="map">
              <svg class="map-art" viewBox="84 1248 1356 1049">
                <rect class="land" x="84" y="1248" width="1356" height="1049"/>
                <path fill="url(#g1)" d="M84 1248H1440V1400H84Z"/>
                <path class="park" d="M200 1248H410V1320H200ZM1220 1248H1250V1262H1220ZM1060 1300H1110V1320H1060Z"/>
                <path class="water" d="M155 1248H205L190 1320H170Z"/>
                <path class="rd-w" d="M410 1248L420 1320M540 1248V1320M780 1248L700 1320M880 1260L1180 1300M1000 1248L960 1320M1180 1248L1120 1320"/>
                <path class="ar" d="M530 1320L710 1250M1405 1248L1440 1320"/>
                <text class="m-a50" transform="translate(590 1305) rotate(-22)">A50</text>
                <text class="m-road" transform="translate(88 1270) rotate(40)">k R</text>
                <text class="m-road" transform="translate(422 1248) rotate(90)">st</text>
              </svg>
            </div></td>
            <td></td><td></td><td></td>
          </tr>
        </tbody>
      </table>
    </main>
    <div class="scrollbar"><div class="thumb"></div></div>
  </div>
</div>
</body>
</html>
```
FILE: styles.css
```css
* { box-sizing: border-box; }
html, body { margin: 0; padding: 0; height: 2054px; overflow: hidden; }
body { background: #1a2020; font-family: "Liberation Sans", Arial, sans-serif; color: #333; }
.defs { position: absolute; }
.app { height: 2046px; display: flex; flex-direction: column; overflow: hidden; }

/* tab strip */
.tabstrip { height: 73px; flex: none; display: flex; align-items: flex-start; border-bottom: 1px solid #a3a3a3; border-radius: 8px 8px 0 0; background: linear-gradient(#ececec, #dcdcdc); }
.lights { width: 143px; flex: none; display: flex; gap: 16px; padding: 26px 0 0 20px; }
.light { width: 24px; height: 24px; border-radius: 50%; }
.red { background: #fc5f5c; border: 1px solid #e5493f; }
.amber { background: #fdbc40; border: 1px solid #e4a32c; }
.green { background: #33c748; border: 1px solid #2aad3c; }
.tab { position: relative; width: 415px; height: 50px; margin-top: 23px; flex: none; display: flex; align-items: center; padding-left: 38px; }
.tab-shape { position: absolute; left: 0; top: 0; width: 415px; height: 50px; }
.tab-shape path { fill: #eeeeee; stroke: #a2a2a2; stroke-width: 1.5; }
.tab-doc { position: relative; width: 20px; height: 29px; flex: none; }
.tab-doc path { fill: none; stroke: #666; stroke-width: 2; }
.tab-title { position: relative; margin-left: 10px; font-size: 24px; letter-spacing: .17px; color: #111; }
.tab-x { position: absolute; left: 366px; top: 18px; width: 14px; height: 14px; }
.tab-x path { fill: none; stroke: #666; stroke-width: 3; }
.newtab { width: 64px; height: 32px; margin: 32px 0 0 -8px; flex: none; }
.newtab path { fill: #d2d2d2; stroke: #a9a9a9; stroke-width: 1.2; }
.profile { margin: 12px 10px 0 auto; width: 99px; height: 51px; padding: 0; border: 1px solid #aeaeae; border-radius: 6px; background: #e3e3e3; font: 24px "Liberation Sans", Arial, sans-serif; color: #111; }

/* toolbar */
.toolbar { height: 72px; flex: none; display: flex; align-items: flex-start; padding: 0 3px; border-bottom: 2px solid #8e8e8e; background: linear-gradient(#eeeeee, #dddddd); }
.navbtn { width: 56px; height: 70px; flex: none; display: flex; align-items: center; justify-content: center; }
.ico-nav { fill: none; stroke: #666; stroke-width: 7; stroke-linecap: round; stroke-linejoin: round; }
.ico-off { stroke: #cbcbcb; }
.ico-reload { fill: none; stroke: #666; stroke-width: 6; }
.ico-fill { fill: #666; }
.omnibox { flex: 1; height: 54px; margin: 7px 6px 0 10px; display: flex; align-items: center; padding: 0 8px 0 14px; background: #fff; border: 1px solid #a9a9a9; border-radius: 6px; }
.omni-doc { width: 23px; height: 30px; flex: none; }
.omni-doc path { fill: #f4f4f4; stroke: #999; stroke-width: 1; }
.url { margin-left: 15px; font-size: 30px; letter-spacing: .2px; color: #000; }
.url-port { color: #777; }
.omni-star { width: 36px; height: 36px; margin-left: auto; }
.omni-star path { fill: #fff; stroke: #8a8a8a; stroke-width: 2; }
.actions { display: flex; flex: none; width: 896px; }
.act { width: 64px; height: 70px; flex: none; display: flex; align-items: center; justify-content: center; }
.ico-t { font-family: "Liberation Sans", Arial, sans-serif; }
.t-g { font-size: 16px; font-weight: 700; fill: #fff; }
.t-zh { font-family: "Noto Sans CJK SC", sans-serif; font-size: 14px; fill: #6b8a9c; }
.t-a { font-size: 26px; fill: #fff; text-anchor: middle; }
.chev { fill: none; stroke: #fff; stroke-width: 5; }
.ico-fq { font: italic 38px "Liberation Serif", serif; color: #111; letter-spacing: 2px; }
.gear-ring { fill: none; stroke: #444; stroke-width: 7; }
.gear-teeth { fill: none; stroke: #444; stroke-width: 6; stroke-dasharray: 3.5 2.500; }
.code-b { fill: none; stroke: #666; stroke-width: 2.500; }
.code-c { fill: none; stroke: #b01c1c; stroke-width: 3; }
.ico-drop { margin-top: 8px; }
.drop-a { fill: none; stroke: #a8a8a8; stroke-width: 8; }
.drop-b { fill: none; stroke: #dd8a4a; stroke-width: 3; }
.drop-c { fill: none; stroke: #444; stroke-width: 11; stroke-linecap: round; }
.ico-box { display: flex; align-items: center; justify-content: center; width: 38px; height: 38px; color: #fff; font-size: 30px; }
.ico-z { background: #5064a8; font-weight: 700; font-size: 34px; }
.ico-a { background: #999; }
.ico-tf { display: flex; align-items: center; justify-content: center; width: 38px; height: 37px; border-radius: 50%; background: #1fae9b; color: #fff; font-size: 30px; font-weight: 700; letter-spacing: -2px; text-shadow: 2px 1px 0 #234; }
.cont-o { fill: #eee; stroke: #aaa; stroke-width: 3; }
.ico-menu { display: flex; flex-direction: column; gap: 4px; width: 32px; }
.ico-menu i { display: block; height: 6px; border-radius: 2px; background: #f7941d; border-bottom: 1px solid #d8701a; }

/* page */
.viewport { flex: 1; min-height: 0; display: flex; background: #fff; }
.page { flex: 1; min-width: 0; overflow: hidden; padding-left: 584px; }
.search { display: flex; width: 2156px; height: 74px; margin: 40px 0 41px 1px; }
.search-input { flex: 1; min-width: 0; height: 74px; padding: 0 22px; border: 2px solid #66afe9; border-radius: 6px 0 0 6px; outline: 0; font: 32px "Liberation Sans", Arial, sans-serif; letter-spacing: .2px; color: #555; }
.search-input::placeholder { color: #999; opacity: 1; }
.search-btn { width: 166px; height: 74px; flex: none; padding: 0; margin-left: -2px; background: #fff; border: 2px solid #ccc; border-radius: 0 6px 6px 0; font: 32px "Liberation Sans", Arial, sans-serif; color: #333; }
.weather { width: 2160px; table-layout: fixed; border-collapse: separate; border-spacing: 0; }
.c-city { width: 498px; }
.c-data { width: 554px; }
.weather th { height: 100px; padding: 0; border-top: 2px solid #eee; border-bottom: 2px solid #e6e6e6; font-size: 32px; font-weight: 700; color: #333; text-align: center; vertical-align: middle; }
.weather th:last-child { padding-right: 2px; }
.weather td { padding: 24px; border-top: 2px solid #eee; vertical-align: top; }
.weather td:last-child { padding: 24px 25px 24px 23px; }
.weather td.city { padding-right: 22px; }

/* sparklines */
.chart { text-align: center; }
.chart svg { display: block; width: 353px; height: 233px; margin: 27px auto 18px; overflow: visible; }
.area { stroke: none; }
.line { fill: none; stroke-width: 2; stroke-linejoin: miter; vector-effect: non-scaling-stroke; }
.ref { stroke: #ff4040; stroke-width: 2; stroke-dasharray: 3.920 3.920; vector-effect: non-scaling-stroke; }
.temp .area { fill: #fff5e6; } .temp .line { stroke: orange; }
.pres .area { fill: #ffe5e5; } .pres .line { stroke: #f00; }
.humi .area { fill: #e5e5fd; } .humi .line { stroke: #00f; }
.avg { margin: 0; font-size: 32px; line-height: 46px; color: #333; }

/* maps */
.map { position: relative; width: 452px; height: 350px; overflow: hidden; }
.map-art { display: block; width: 452px; height: 350px; }
.g-logo { position: absolute; left: 13px; top: 292px; font: 500 39px/60px Roboto, sans-serif; white-space: nowrap; text-shadow: 0 0 3px #fff, 0 0 3px #fff, 0 0 3px #fff; }
.g1 { color: #4285f4; } .g2 { color: #ea4335; } .g3 { color: #fbbc05; } .g4 { color: #34a853; }
.map-foot { position: absolute; left: 68px; right: 0; bottom: 0; height: 27px; display: flex; align-items: center; padding-left: 10px; background: rgba(255,255,255,.72); font: 20px/27px Roboto, sans-serif; color: #444; white-space: nowrap; }
.foot-data { width: 231px; flex: none; }
.foot-terms { height: 27px; padding-left: 11px; border-left: 1px solid rgba(255,255,255,.8); }
.land { fill: #e8e4dc; }
.land-d { fill: #dcd8d1; }
.land-l { fill: #ece9e1; }
.park { fill: #cbe0a8; }
.park-t { fill: #c2d9c2; }
.beige { fill: #ead9ae; }
.pink { fill: #e8cdc8; }
.water { fill: #a1c4fb; }
.gl { fill: none; stroke: #f6f4ee; stroke-width: 3; }
.gl-w { stroke: #fff; stroke-width: 5; }
.gl-p { stroke: #f1eee7; }
.rd-b { fill: none; stroke: #fff; stroke-width: 9; }
.rd-w { fill: none; stroke: #fff; stroke-width: 7; stroke-linejoin: round; }
.rd-m { fill: none; stroke: #fbfaf6; stroke-width: 5; }
.rd-s { fill: none; stroke: #f8f6f0; stroke-width: 3.500; }
.rd-thin { fill: none; stroke: #b5b3ae; stroke-width: 3; }
.rail { fill: none; stroke: #c4c3bf; stroke-width: 3.500; }
.rail-f { fill: #bcbcb9; stroke: #b9b9b6; stroke-width: 3; stroke-linejoin: round; }
.dash { fill: none; stroke: #9a9a9a; stroke-width: 6; stroke-dasharray: 50 22; }
.ar { fill: none; stroke: #fdd668; stroke-width: 14; stroke-linejoin: round; stroke-linecap: round; }
.ar-t { fill: none; stroke: #fde29a; stroke-width: 7; }
.hw { fill: none; stroke: #f89a1c; stroke-width: 22; stroke-linejoin: round; stroke-linecap: round; }
.hw-t { stroke-width: 12; }
.river { fill: none; stroke: #90b9fc; stroke-width: 14; stroke-linejoin: round; }
.river-p { fill: none; stroke: #90b9fc; stroke-width: 27; }
.stream { fill: none; stroke: #8cb6fb; stroke-width: 3.500; }
.stream2 { fill: none; stroke: #90b9fc; stroke-width: 10; }
.shield { fill: #eef0f2; stroke: #8c8c8c; stroke-width: 4; }
.shield2 { fill: #fff; stroke: #444; stroke-width: 5; }
.museum { fill: none; stroke: #fff; stroke-width: 6; }
.ico-bg { fill: #fff; }
.pin { fill: none; stroke: #7b5a52; stroke-width: 6; }
.pin-f { fill: #7b5a52; }
.map-art text { font-family: Roboto, sans-serif; paint-order: stroke; stroke: rgba(255,255,255,.55); stroke-width: 8px; stroke-linejoin: round; }
.map-art .m-area { font-size: 52px; font-style: italic; fill: #8b7f63; letter-spacing: 3px; }
.map-art .m-s { font-size: 50px; letter-spacing: 1px; }
.map-art .m-faint { fill: #cfc9b9; }
.map-art .m-b { font-size: 74px; letter-spacing: 8px; fill: #7c6e4d; font-weight: 500; }
.map-art .m-b2 { font-size: 64px; letter-spacing: 4px; fill: #7c6e4d; font-weight: 500; }
.map-art .m-road { font-size: 54px; fill: #444; }
.map-art .m-fade { fill: #999; }
.map-art .m-city { font-size: 112px; font-weight: 500; fill: #483e27; letter-spacing: 11px; }
.map-art .m-rome { font-size: 84px; fill: #483e27; }
.map-art .m-poi { font-size: 58px; fill: #444; }
.map-art .m-poi2 { font-size: 64px; fill: #444; }
.map-art .m-green { font-size: 58px; fill: #1e7a1e; }
.map-art .m-green2 { font-size: 64px; fill: #3c7d24; }
.map-art .m-num { font-size: 50px; fill: #222; text-anchor: middle; stroke: none; }
.map-art .m-a50 { font-size: 54px; fill: #7a4a10; }

/* scrollbar */
.scrollbar { width: 29px; flex: none; padding: 5px 5px 0 7px; border-left: 2px solid #e8e8e8; background: #fafafa; }
.thumb { width: 15px; height: 1570px; border-radius: 8px; background: #c1c1c1; }
```
